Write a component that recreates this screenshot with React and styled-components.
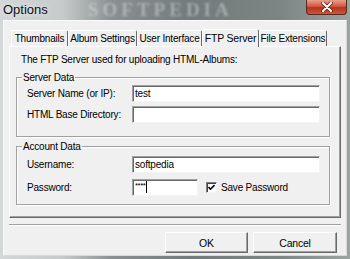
import React from 'react';
import styled, { createGlobalStyle } from 'styled-components';

const Global = createGlobalStyle`
  html, body { margin: 0; padding: 0; background: #3c4244; }
  body { font-family: "Liberation Sans", Arial, sans-serif; }
`;

const Window = styled.div`
  width: 350px;
  height: 259px;
  display: flex;
  flex-direction: column;
  overflow: hidden;
  background: linear-gradient(90deg, #d3d7d8 0%, #c6cacb 18%, #8a9091 32%, #737a7b 55%, #7d8584 80%, #9aa4a0 100%);
`;

const TitleBar = styled.div`
  height: 20px;
  display: flex;
  align-items: flex-start;
  overflow: hidden;
`;

const Title = styled.div`
  padding: 2px 0 0 3px;
  font-size: 13px;
  line-height: 16px;
  color: #101010;
  text-shadow: 0 0 6px rgba(255, 255, 255, 0.9);
  width: 85px;
`;

const Watermark = styled.div`
  flex: 1;
  font-family: "Liberation Serif", serif;
  font-size: 19px;
  font-weight: bold;
  letter-spacing: 4px;
  line-height: 20px;
  color: rgba(235, 238, 238, 0.4);
  filter: blur(1.2px);
  white-space: nowrap;
`;

const CloseButton = styled.div`
  width: 39px;
  height: 14px;
  margin-right: 3px;
  border: 1px solid #5a2a22;
  border-top: none;
  border-radius: 0 0 4px 4px;
  background: linear-gradient(180deg, #e8a08c 0%, #d0583e 45%, #b8321c 55%, #c85a3a 100%);
  display: flex;
  align-items: center;
  justify-content: center;
`;

const Client = styled.div`
  flex: 1;
  margin: 0 3px 3px 3px;
  background: #f0f0f0;
  border: 1px solid #fafafa;
  border-right-color: #d8d8d8;
  border-bottom-color: #d8d8d8;
  padding: 7px 5px 0 5px;
  display: flex;
  flex-direction: column;
  font-size: 10px;
  letter-spacing: -0.2px;
  color: #000;
`;

const TabStrip = styled.div`
  height: 18px;
  display: flex;
  align-items: flex-end;
  padding-left: 2px;
`;

const Tab = styled.div`
  width: ${p => p.$w}px;
  height: ${p => (p.$active ? 18 : 16)}px;
  box-sizing: border-box;
  border: 1px solid #fff;
  border-right-color: #696969;
  border-bottom: none;
  border-radius: 2px 2px 0 0;
  background: #f0f0f0;
  display: flex;
  align-items: center;
  justify-content: center;
  font-size: ${p => (p.$active ? 10.5 : 10)}px;
  padding-bottom: ${p => (p.$active ? 2 : 0)}px;
  margin-bottom: ${p => (p.$active ? -1 : 0)}px;
  position: relative;
  z-index: ${p => (p.$active ? 1 : 0)};
  white-space: nowrap;
`;

const Panel = styled.div`
  height: 172px;
  box-sizing: border-box;
  border: 1px solid #fff;
  border-right-color: #696969;
  border-bottom-color: #696969;
  box-shadow: inset -1px -1px 0 #a0a0a0;
  padding: 6px 10px 0 6px;
  display: flex;
  flex-direction: column;
`;

const Intro = styled.div`
  margin-left: 5px;
  line-height: 13px;
  height: 13px;
`;

const GroupBox = styled.div`
  position: relative;
  height: ${p => p.$h}px;
  box-sizing: border-box;
  margin-top: ${p => p.$mt}px;
  border: 1px solid #a0a0a0;
  box-shadow: inset 1px 1px 0 #fff, 1px 1px 0 #fff;
  padding: ${p => p.$pt}px 0 0 10px;
  display: flex;
  flex-direction: column;
  gap: ${p => p.$gap}px;
`;

const Legend = styled.div`
  position: absolute;
  left: 5px;
  top: -7px;
  padding: 0 1px;
  background: #f0f0f0;
  line-height: 13px;
`;

const Row = styled.div`
  display: flex;
  align-items: center;
  height: 17px;
`;

const Label = styled.div`
  width: 105px;
  white-space: nowrap;
`;

const Field = styled.div`
  width: ${p => p.$w}px;
  height: 17px;
  box-sizing: border-box;
  background: #fff;
  border: 1px solid #a0a0a0;
  border-right-color: #f4f4f4;
  border-bottom-color: #f4f4f4;
  box-shadow: inset 1px 1px 0 #696969;
  padding: 1px 0 0 2px;
  line-height: 14px;
  display: flex;
  align-items: flex-start;
`;

const Stars = styled.span`
  font-size: 8px;
  line-height: 8px;
  letter-spacing: -0.5px;
  margin-top: 1px;
`;

const Caret = styled.span`
  width: 1px;
  height: 12px;
  background: #000;
  margin-left: 1px;
`;

const CheckBox = styled.div`
  width: 11px;
  height: 11px;
  box-sizing: border-box;
  margin-left: 8px;
  background: #fff;
  border: 1px solid #808080;
  border-right-color: #f4f4f4;
  border-bottom-color: #f4f4f4;
  box-shadow: inset 1px 1px 0 #404040;
  display: flex;
  align-items: center;
  justify-content: center;
`;

const CheckLabel = styled.div`
  margin-left: 4px;
  white-space: nowrap;
`;

const Separator = styled.div`
  margin-top: 6px;
  height: 0;
  border-top: 1px solid #a0a0a0;
  border-bottom: 1px solid #fff;
`;

const ButtonRow = styled.div`
  margin-top: 6px;
  display: flex;
  justify-content: flex-end;
  gap: 5px;
  padding-right: 4px;
`;

const Button = styled.div`
  width: ${p => p.$w}px;
  height: 21px;
  box-sizing: border-box;
  border: 1px solid #fff;
  border-right-color: #696969;
  border-bottom-color: #696969;
  box-shadow: inset -1px -1px 0 #a0a0a0;
  display: flex;
  align-items: center;
  justify-content: center;
  font-size: 10.5px;
`;

const tabs = [
  { label: 'Thumbnails', w: 57 },
  { label: 'Album Settings', w: 69 },
  { label: 'User Interface', w: 65 },
  { label: 'FTP Server', w: 57, active: true },
  { label: 'File Extensions', w: 68 },
];

export default function App() {
  return (
    <>
      <Global />
      <Window>
        <TitleBar>
          <Title>Options</Title>
          <Watermark>SOFTPEDIA</Watermark>
          <CloseButton>
            <svg width="12" height="10" viewBox="0 0 12 10">
              <path d="M2 1 L10 9 M10 1 L2 9" stroke="#5a1a10" strokeWidth="3.4" strokeLinecap="round" />
              <path d="M2 1 L10 9 M10 1 L2 9" stroke="#fff" strokeWidth="2" strokeLinecap="round" />
            </svg>
          </CloseButton>
        </TitleBar>
        <Client>
          <TabStrip>
            {tabs.map(t => (
              <Tab key={t.label} $w={t.w} $active={t.active}>{t.label}</Tab>
            ))}
          </TabStrip>
          <Panel>
            <Intro>The FTP Server used for uploading HTML-Albums:</Intro>
            <GroupBox $h={60} $mt={11} $pt={7} $gap={4}>
              <Legend>Server Data</Legend>
              <Row>
                <Label>Server Name (or IP):</Label>
                <Field $w={188}>test</Field>
              </Row>
              <Row>
                <Label>HTML Base Directory:</Label>
                <Field $w={188} />
              </Row>
            </GroupBox>
            <GroupBox $h={59} $mt={9} $pt={9} $gap={6}>
              <Legend>Account Data</Legend>
              <Row>
                <Label>Username:</Label>
                <Field $w={188}>softpedia</Field>
              </Row>
              <Row>
                <Label>Password:</Label>
                <Field $w={66}>
                  <Stars>****</Stars>
                  <Caret />
                </Field>
                <CheckBox>
                  <svg width="7" height="7" viewBox="0 0 7 7">
                    <path d="M0.5 3 L2.5 5.2 L6.5 1" stroke="#000" strokeWidth="1.6" fill="none" />
                  </svg>
                </CheckBox>
                <CheckLabel>Save Password</CheckLabel>
              </Row>
            </GroupBox>
          </Panel>
          <Separator />
          <ButtonRow>
            <Button $w={83}>OK</Button>
            <Button $w={84}>Cancel</Button>
          </ButtonRow>
        </Client>
      </Window>
    </>
  );
}
